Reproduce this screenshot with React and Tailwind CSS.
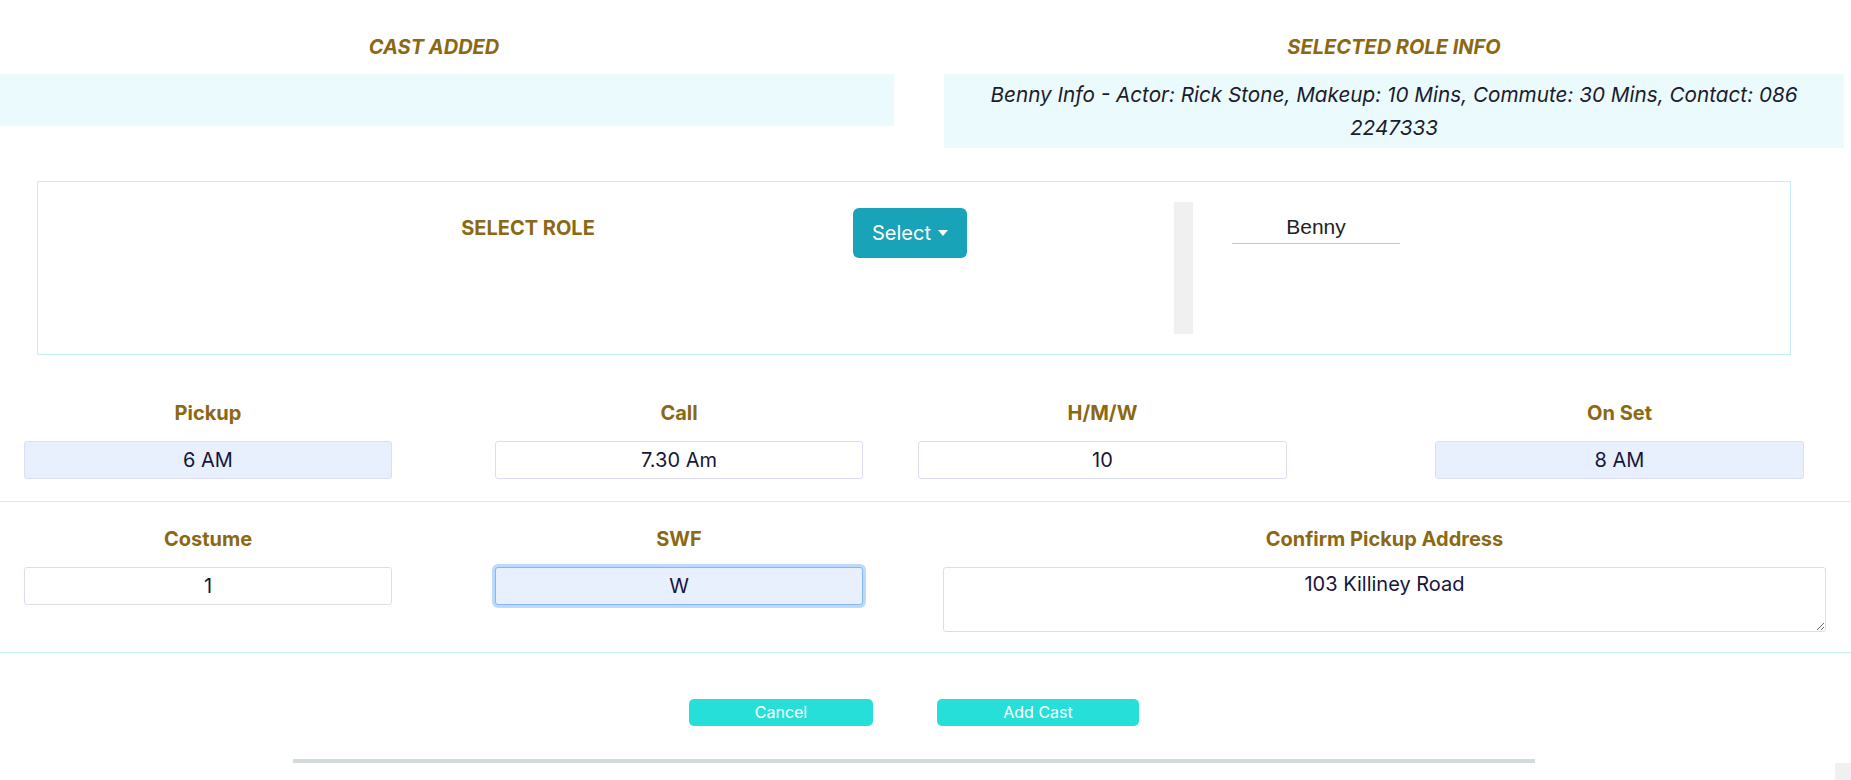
export default function App() {
    const label = "text-center text-[20px] leading-[24px] font-bold text-[#8b6914]";
    const input =
        "block w-full h-[38px] rounded-[3px] border border-[#dddcf3] text-center text-[20px] text-[#16163a] outline-none";

    return (
        <div className="relative w-[1851px] h-[780px] overflow-hidden bg-white font-['Inter',sans-serif] text-[#1c1c2c]">
            {/* header: cast added / selected role info */}
            <div className="flex items-start pt-[35px]">
                <div className="w-[894px]">
                    <h2 className="pr-[26px] text-center text-[20px] leading-[24px] font-bold italic text-[#8b6914]">
                        CAST ADDED
                    </h2>
                    <div className="mt-[15px] h-[52px] bg-[#eafafd]" />
                </div>
                <div className="ml-[50px] w-[900px]">
                    <h2 className="text-center text-[20px] leading-[24px] font-bold italic text-[#8b6914]">
                        SELECTED ROLE INFO
                    </h2>
                    <div className="mt-[15px] bg-[#eafafd] px-[30px] py-[4px] text-center text-[20.7px] leading-[33px] italic text-[#1c1c2c]">
                        Benny Info - Actor: Rick Stone, Makeup: 10 Mins,
                        Commute: 30 Mins, Contact: 086 2247333
                    </div>
                </div>
            </div>

            {/* select role box */}
            <div className="ml-[37px] mt-[33px] flex h-[174px] w-[1754px] items-start border border-[#c6eef5]">
                <div className={`ml-[350px] mt-[34px] w-[280px] uppercase ${label}`}>
                    SELECT ROLE
                </div>
                <button className="ml-[185px] mt-[26px] flex h-[50px] w-[114px] items-center justify-center gap-[7px] rounded-[6px] bg-[#19a3b8] text-[20px] text-white">
                    Select
                    <svg width="10" height="6" viewBox="0 0 10 6">
                        <polygon points="0,0 10,0 5,6" fill="white" />
                    </svg>
                </button>
                <div className="ml-[207px] mt-[20px] h-[132px] w-[19px] bg-[#f0f0f0]" />
                <div className="ml-[39px] mt-[31px] h-[31px] w-[168px] border-b border-[#e0c585] text-center font-['Liberation_Sans',sans-serif] text-[21px] leading-[28px] text-[#222]">
                    Benny
                </div>
            </div>

            {/* times row */}
            <div className="mt-[46px] flex items-start pl-[24px]">
                <div className="w-[368px]">
                    <div className={label}>Pickup</div>
                    <input className={`mt-[16px] bg-[#e8f0fe] ${input}`} defaultValue="6 AM" readOnly />
                </div>
                <div className="ml-[103px] w-[368px]">
                    <div className={label}>Call</div>
                    <input className={`mt-[16px] bg-white ${input}`} defaultValue="7.30 Am" readOnly />
                </div>
                <div className="ml-[55px] w-[369px]">
                    <div className={label}>H/M/W</div>
                    <input className={`mt-[16px] bg-white ${input}`} defaultValue="10" readOnly />
                </div>
                <div className="ml-[148px] w-[369px]">
                    <div className={label}>On Set</div>
                    <input className={`mt-[16px] bg-[#e8f0fe] ${input}`} defaultValue="8 AM" readOnly />
                </div>
            </div>

            <div className="mt-[22px] border-t border-[#c9f0ee]" />

            {/* costume row */}
            <div className="mt-[25px] flex items-start pl-[24px]">
                <div className="w-[368px]">
                    <div className={label}>Costume</div>
                    <input className={`mt-[16px] bg-white ${input}`} defaultValue="1" readOnly />
                </div>
                <div className="ml-[103px] w-[368px]">
                    <div className={label}>SWF</div>
                    <input
                        className={`mt-[16px] bg-[#e8f0fe] ${input} !border-[#86b7f5] shadow-[0_0_0_3px_#bcdafd]`}
                        defaultValue="W"
                        readOnly
                    />
                </div>
                <div className="ml-[80px] w-[883px]">
                    <div className={label}>Confirm Pickup Address</div>
                    <textarea
                        className="mt-[16px] block h-[65px] w-full rounded-[3px] border border-[#dddcf3] bg-white pt-[3px] text-center text-[20px] leading-[26px] text-[#16163a] outline-none"
                        defaultValue="103 Killiney Road"
                        readOnly
                    />
                </div>
            </div>

            <div className="mt-[20px] border-t border-[#c6f1f3]" />

            {/* actions */}
            <div className="mt-[46px] flex pl-[689px]">
                <button className="h-[27px] w-[184px] rounded-[5px] bg-[#27dfd9] text-[16px] leading-[27px] text-white">
                    Cancel
                </button>
                <button className="ml-[64px] h-[27px] w-[202px] rounded-[5px] bg-[#27dfd9] text-[16px] leading-[27px] text-white">
                    Add Cast
                </button>
            </div>

            <div className="mt-[33px] flex items-start">
                <div className="ml-[293px] h-[4px] w-[1242px] bg-[#d1dbdc]" />
                <div className="ml-[300px] mt-[4px] h-[17px] w-[16px] bg-[#f0f0f0]" />
            </div>
        </div>
    );
}
